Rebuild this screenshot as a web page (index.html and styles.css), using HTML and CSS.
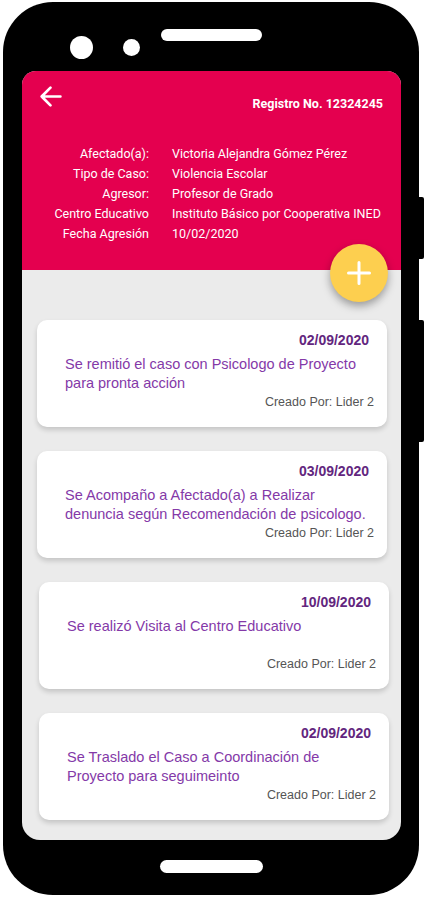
FILE: index.html
```
<!DOCTYPE html>
<html lang="es">
<head>
<meta charset="utf-8">
<title>Registro</title>
<link rel="stylesheet" href="styles.css">
</head>
<body>
<div class="phone">
  <span class="side-btn side-btn-1"></span>
  <span class="side-btn side-btn-2"></span>
  <div class="bezel-top">
    <span class="cam cam-big"></span>
    <span class="cam cam-small"></span>
    <span class="speaker"></span>
  </div>
  <div class="screen">
    <header class="header">
      <div class="topbar">
        <svg class="back" width="25" height="25" viewBox="0 0 24 24" fill="none" stroke="#fff" stroke-width="2.6" stroke-linecap="round" stroke-linejoin="round"><path d="M21.5 12H3.5M12 3.5L3.5 12 12 20.5"/></svg>
        <div class="registro">Registro No. 12324245</div>
      </div>
      <div class="info">
        <div class="lbl">Afectado(a):</div><div class="val">Victoria Alejandra Gómez Pérez</div>
        <div class="lbl">Tipo de Caso:</div><div class="val">Violencia Escolar</div>
        <div class="lbl">Agresor:</div><div class="val">Profesor de Grado</div>
        <div class="lbl">Centro Educativo</div><div class="val">Instituto Básico por Cooperativa INED</div>
        <div class="lbl">Fecha Agresión</div><div class="val">10/02/2020</div>
      </div>
    </header>
    <button class="fab" aria-label="Agregar">
      <svg width="24" height="24" viewBox="0 0 24 24" fill="none" stroke="#fff" stroke-width="3" stroke-linecap="round"><path d="M12 1.5v21M1.5 12h21"/></svg>
    </button>
    <main class="list">
      <div class="card">
        <div class="date">02/09/2020</div>
        <div class="desc">Se remitió el caso con Psicologo de Proyecto para pronta acción</div>
        <div class="author">Creado Por: Lider 2</div>
      </div>
      <div class="card">
        <div class="date">03/09/2020</div>
        <div class="desc">Se Acompaño a Afectado(a) a Realizar denuncia según Recomendación de psicologo.</div>
        <div class="author">Creado Por: Lider 2</div>
      </div>
      <div class="card card-shift">
        <div class="date">10/09/2020</div>
        <div class="desc">Se realizó Visita al Centro Educativo</div>
        <div class="author">Creado Por: Lider 2</div>
      </div>
      <div class="card card-shift">
        <div class="date">02/09/2020</div>
        <div class="desc">Se Traslado el Caso a Coordinación de Proyecto para seguimeinto</div>
        <div class="author">Creado Por: Lider 2</div>
      </div>
    </main>
  </div>
  <div class="bezel-bottom">
    <span class="home"></span>
  </div>
</div>
</body>
</html>
```
FILE: styles.css
```
* { box-sizing: border-box; }
html, body {
  margin: 0;
  padding: 0;
  background: #ffffff;
}
body {
  width: 425px;
  height: 900px;
  overflow: hidden;
  padding: 2px 0 0 3px;
  font-family: "Liberation Sans", Arial, sans-serif;
}
.phone {
  position: relative;
  width: 416px;
  height: 893px;
  background: #000;
  border-radius: 50px;
  padding: 0 18px 0 19px;
  display: flex;
  flex-direction: column;
}
.side-btn {
  position: absolute;
  right: -5px;
  width: 6px;
  background: #000;
  border-radius: 0 2px 2px 0;
}
.side-btn-1 { top: 195px; height: 62px; }
.side-btn-2 { top: 318px; height: 122px; }

.bezel-top {
  height: 69px;
  display: flex;
  align-items: flex-start;
  padding-left: 48px;
}
.cam {
  display: block;
  background: #fff;
  border-radius: 50%;
}
.cam-big { width: 23px; height: 23px; margin-top: 34px; }
.cam-small { width: 17px; height: 17px; margin-top: 37px; margin-left: 30px; }
.speaker {
  display: block;
  width: 101px;
  height: 12px;
  border-radius: 6px;
  background: #fff;
  margin-top: 27px;
  margin-left: 21px;
}

.screen {
  position: relative;
  width: 379px;
  height: 769px;
  border-radius: 14px 14px 18px 18px;
  overflow: hidden;
  background: #ebebeb;
  display: flex;
  flex-direction: column;
}
.header {
  height: 199px;
  background: #e4004f;
  color: #fff;
  font-family: Roboto, "Liberation Sans", sans-serif;
  padding: 13px 18px 0 0;
  flex-shrink: 0;
}
.topbar {
  display: flex;
  align-items: flex-start;
  justify-content: space-between;
  height: 24px;
  padding-left: 16px;
}
.back { display: block; }
.registro {
  font-weight: 700;
  font-size: 12.5px;
  line-height: 16px;
  margin-top: 12px;
}
.info {
  margin-top: 36px;
  display: grid;
  grid-template-columns: 127px 1fr;
  column-gap: 23px;
  font-size: 12.5px;
  line-height: 20px;
}
.lbl { text-align: right; white-space: nowrap; }
.val { white-space: nowrap; }

.fab {
  position: absolute;
  left: 308px;
  top: 173px;
  width: 58px;
  height: 58px;
  border-radius: 50%;
  border: none;
  padding: 0;
  background: #fdcf4f;
  box-shadow: 0 4px 8px rgba(0,0,0,0.35);
  display: flex;
  align-items: center;
  justify-content: center;
}
.fab svg { display: block; }

.list {
  flex: 1;
  padding: 50px 14px 0 15px;
  display: flex;
  flex-direction: column;
  gap: 24px;
}
.card {
  height: 107px;
  flex-shrink: 0;
  background: #fff;
  border-radius: 10px;
  box-shadow: 0 3px 5px rgba(0,0,0,0.16);
  padding: 11px 13px 17px 28px;
  display: flex;
  flex-direction: column;
}
.card-shift { margin-left: 2px; margin-right: -2px; }
.date {
  text-align: right;
  font-weight: 700;
  font-size: 14px;
  line-height: 18px;
  color: #62267e;
  margin-right: 5px;
}
.desc {
  margin-top: 6px;
  font-size: 14.5px;
  line-height: 19px;
  color: #8439a8;
}
.author {
  margin-top: auto;
  text-align: right;
  font-size: 12.5px;
  line-height: 15px;
  color: #555;
}

.bezel-bottom {
  flex: 1;
  display: flex;
  justify-content: center;
  align-items: flex-start;
  padding-top: 20px;
}
.home {
  display: block;
  width: 103px;
  height: 13px;
  border-radius: 7px;
  background: #fff;
}
```
